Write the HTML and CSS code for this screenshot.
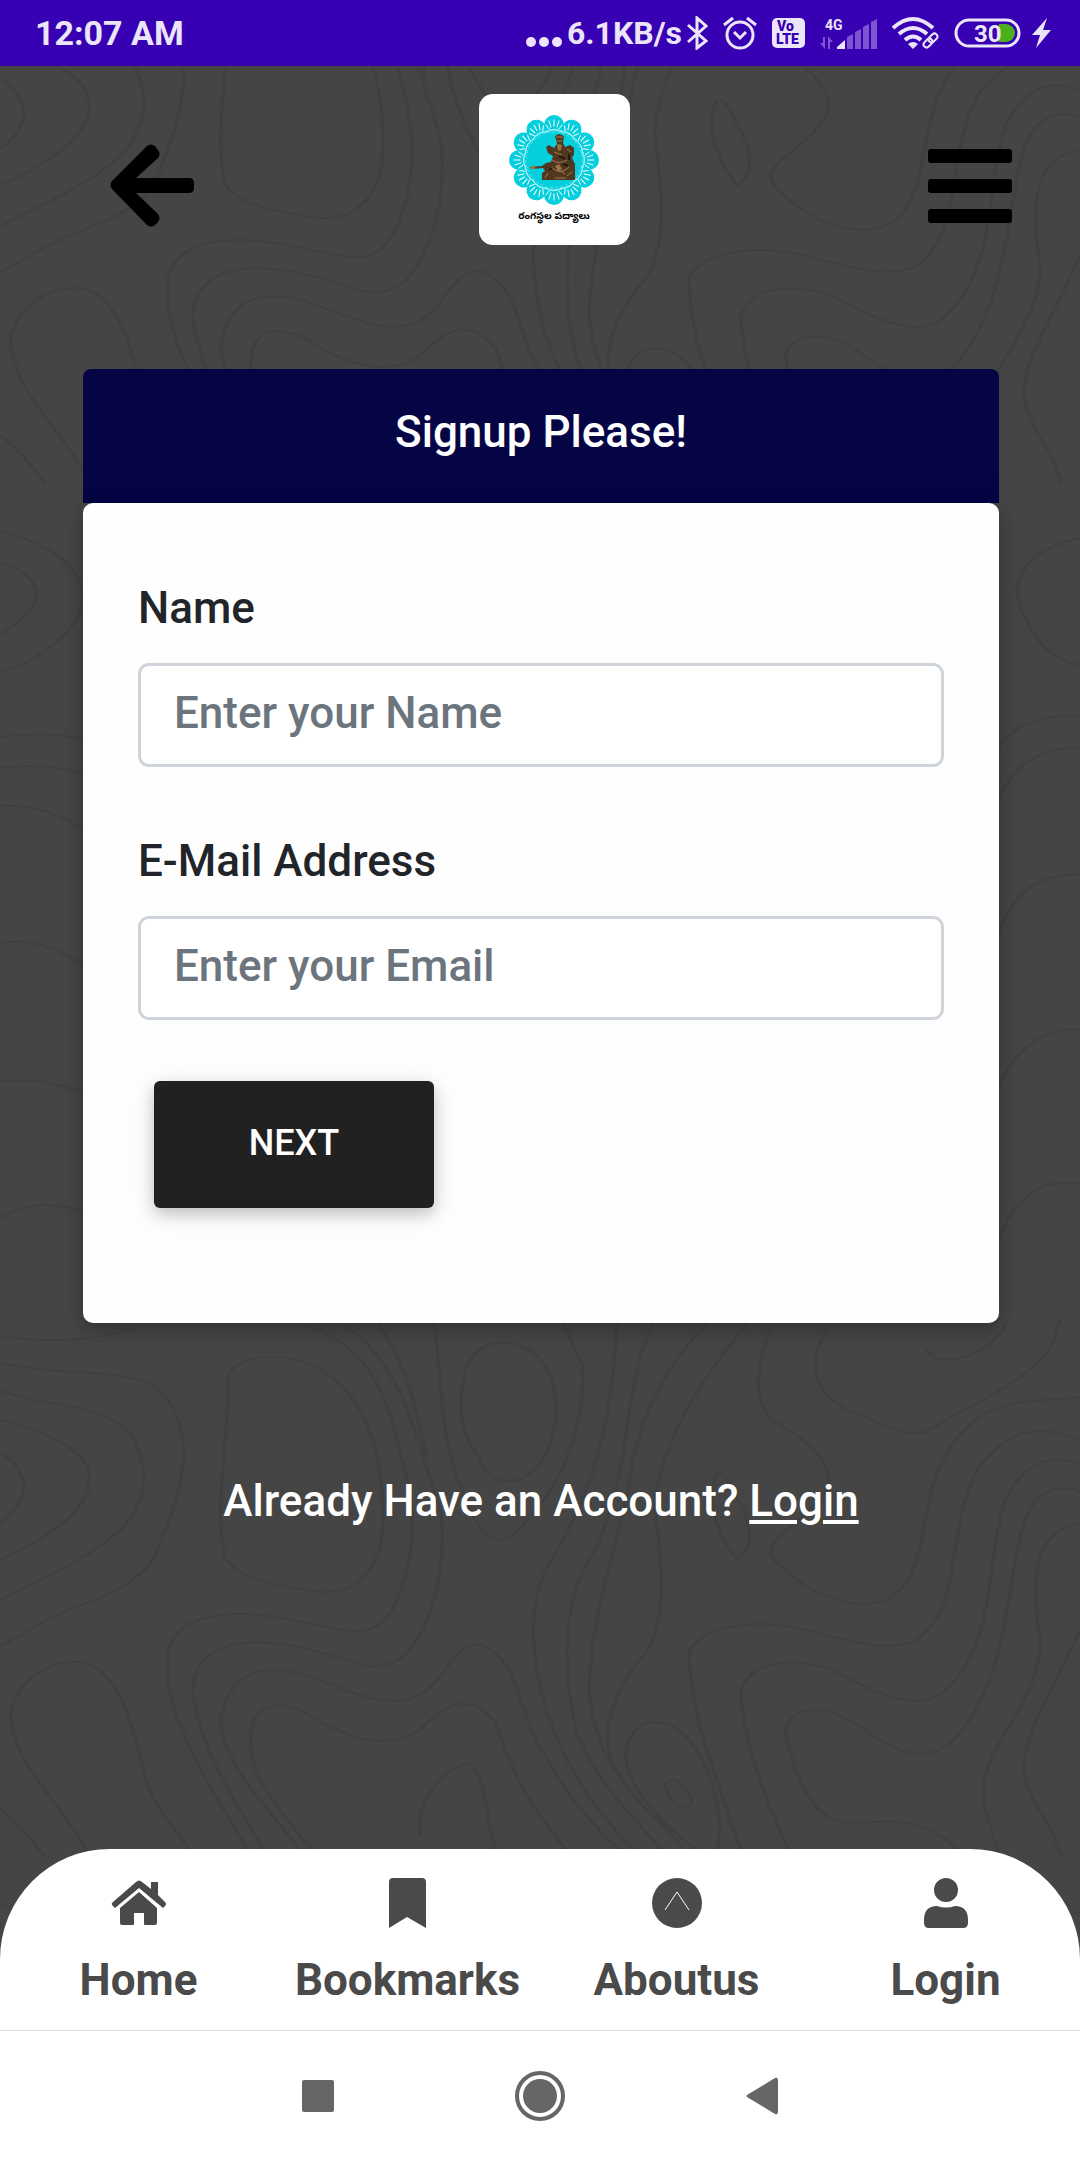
FILE: index.html
```html
<!DOCTYPE html>
<html lang="en">
<head>
    <meta charset="UTF-8">
    <meta name="viewport" content="width=device-width, initial-scale=1.0">
    <title>Signup</title>
    <link rel="stylesheet" href="styles.css">
</head>
<body>
    <!-- contour lines behind the page, the same tile twice -->
    <svg class="contours" viewBox="0 0 1080 2160" preserveAspectRatio="xMidYMin slice" aria-hidden="true">
        <defs>
            <g id="tile">
                <g transform="scale(0.689 0.344)">
                    <path d="M0 45C70 70 150 60 205 15M0 125C100 165 190 140 230 200C300 340 250 560 230 660C210 790 100 830 60 880C30 920 10 935 0 950"/>
                    <path d="M0 205C60 250 130 240 180 310C220 400 215 520 180 600C130 700 30 780 0 815M0 290C80 330 130 390 130 460C130 570 50 650 0 695M0 385C40 430 50 520 0 590"/>
                    <path d="M330 170C340 90 430 90 470 150C540 240 560 430 555 620C550 720 520 800 460 790C400 770 335 750 325 680C310 520 335 330 330 170Z"/>
                    <path d="M420 0C540 60 560 220 580 380C610 570 600 720 570 840C540 940 500 900 430 875C350 840 260 840 245 960C230 1130 300 1340 360 1540"/>
                    <path d="M490 0C590 130 600 330 640 560C650 760 620 900 590 970C540 1060 500 960 400 940C300 920 280 1010 280 1080C290 1250 340 1400 390 1560"/>
                    <path d="M545 0C600 150 605 300 620 400M320 1170C330 1020 380 1000 440 1030C500 1070 560 1140 610 1090C650 1040 660 930 700 945C760 1000 750 1150 790 1260C820 1380 860 1470 910 1560"/>
                    <path d="M320 1170C330 1330 410 1450 440 1560M460 1560C410 1430 355 1330 365 1190C370 1110 410 1100 450 1150C500 1210 560 1260 610 1190C650 1110 680 1080 720 1170C740 1310 770 1420 830 1560"/>
                    <path d="M675 150C690 40 760 40 790 130C825 250 800 400 770 445C740 490 710 470 695 400C665 320 665 240 675 150ZM630 0C640 160 640 360 670 490C700 660 730 680 770 570C830 440 850 260 845 130L815 0"/>
                    <path d="M895 0C890 300 860 500 800 700C760 830 775 1000 790 1120C820 1300 860 1420 930 1560M950 0C900 200 920 450 860 680C810 830 820 1050 835 1180C850 1310 920 1450 970 1560"/>
                    <path d="M1030 0C960 150 920 300 910 520C890 680 860 850 855 1060C860 1300 930 1400 990 1530M1090 0C1020 160 960 350 950 540C960 700 970 850 940 960C890 1070 870 1200 890 1290C930 1450 990 1490 1020 1560"/>
                    <path d="M1120 20C1100 120 1090 230 1120 290C1190 370 1210 430 1200 490C1170 600 1090 640 1130 710C1180 810 1250 850 1290 810C1350 740 1330 560 1370 400C1420 230 1470 240 1568 225"/>
                    <path d="M1200 30C1170 120 1180 210 1230 260C1280 300 1320 350 1350 320C1400 250 1500 180 1530 60L1538 0M1345 80C1350 150 1440 110 1460 10M1040 450C1020 540 1050 650 1070 695C1100 660 1085 560 1070 520C1060 470 1050 440 1040 450Z"/>
                    <path d="M1000 960C1020 900 1080 870 1140 890C1210 910 1280 980 1330 930C1400 830 1370 620 1420 430C1460 330 1500 290 1568 350M1000 960C1000 1150 1040 1320 1060 1460L1080 1560"/>
                    <path d="M1075 1080C1090 980 1160 980 1210 1020C1260 1070 1330 1150 1370 1080C1450 940 1430 680 1460 520C1490 400 1530 390 1568 420M1075 1080C1080 1250 1120 1440 1150 1560"/>
                    <path d="M1140 1190C1150 1110 1210 1130 1240 1170C1290 1240 1330 1300 1380 1230C1470 1050 1460 720 1490 570C1510 480 1550 480 1568 500M1140 1190C1150 1330 1180 1440 1220 1460C1270 1470 1330 1420 1390 1540"/>
                    <path d="M1568 590C1490 620 1500 780 1510 950C1500 1150 1410 1260 1430 1420L1450 1560M1540 1560C1520 1400 1460 1380 1500 1180L1568 900"/>
                    <path d="M15 1150C20 1050 80 970 130 1000C180 1050 190 1180 210 1320C220 1420 260 1480 280 1560M15 1150C20 1300 90 1400 130 1560M0 1420C30 1470 50 1520 65 1560"/>
                    <path d="M610 1500C600 1400 650 1290 680 1290C710 1330 700 1430 720 1540M910 1240C920 1150 970 1150 1000 1220C1040 1320 1050 1460 1040 1560M910 1240C900 1320 940 1420 990 1510M965 1350C980 1310 1000 1370 1005 1400C995 1440 970 1400 965 1350Z"/>
                    <path d="M0 1700C120 1760 150 1900 90 2010C50 2080 20 2100 0 2110M0 1790C60 1830 80 1910 0 2000M0 2300C100 2270 200 2330 240 2420M0 2390C110 2360 180 2440 230 2560M0 2500C90 2490 160 2600 200 2760M0 2900C60 2870 140 2960 190 3100M0 3300C90 3280 160 3350 210 3500M0 3700C80 3600 180 3700 200 3860"/>
                    <path d="M1568 1720C1480 1760 1460 1860 1490 1960C1510 2050 1540 2080 1568 2090M1568 2240C1490 2230 1450 2290 1430 2400M1568 2330C1480 2330 1450 2440 1440 2560M1568 2700C1490 2690 1450 2800 1440 2960M1568 3150C1500 3140 1450 3260 1440 3380M1568 3600C1490 3570 1450 3700 1440 3850"/>
                </g>
            </g>
        </defs>
        <use href="#tile" y="-54"/>
        <use href="#tile" y="1320"/>
    </svg>

    <div class="status-bar">
        <span class="clock">12:07 AM</span>
        <div class="status-icons">
            <div class="speed">
                <svg width="36" height="34" viewBox="0 0 36 34"><g fill="currentColor"><circle cx="5" cy="26" r="5"/><circle cx="18" cy="26" r="5"/><circle cx="31" cy="26" r="5"/></g></svg>
                <span>6.1KB/s</span>
                <svg width="21" height="34" viewBox="0 0 21 34"><path d="M1 9L19 25L10 32V2L19 10L1 26" fill="none" stroke="currentColor" stroke-width="3"/></svg>
            </div>
            <svg width="34" height="34" viewBox="0 0 34 34"><g fill="none" stroke="currentColor" stroke-width="3"><circle cx="17" cy="19" r="13"/><path d="M11 16L17 22L23 16M1 9L10 2M24 2L33 9"/></g></svg>
            <svg width="33" height="30" viewBox="0 0 33 30"><rect width="33" height="30" rx="5" fill="currentColor"/><g fill="#3700b3" font-family="Roboto, sans-serif" font-weight="900" font-size="14"><text x="5" y="13">Vo</text><text x="4" y="26">LTE</text></g></svg>
            <svg width="57" height="34" viewBox="0 0 57 34">
                <text x="5" y="14" fill="currentColor" font-family="Roboto, sans-serif" font-weight="700" font-size="14">4G</text>
                <g fill="#7d55d0"><path d="M0 27h3v-6h2v12zM8 20l5 6h-3v7H8zM27 21l6-3v15h-6zM35 16l6-3v20h-6zM43 11l6-3v25h-6zM51 6l6-3v30h-6z"/></g>
                <path d="M17 33V31L25 24V33z" fill="currentColor"/>
            </svg>
            <svg width="47" height="34" viewBox="0 0 47 34">
                <g fill="none" stroke="currentColor" stroke-width="4"><path d="M1 12Q21-6 41 12M7 18Q21 6 35 18M13 24Q21 17 29 24"/></g>
                <path d="M16 28Q21 24 26 28L21 33z" fill="currentColor"/>
                <g fill="none" stroke="currentColor" stroke-width="2"><rect x="31" y="24" width="10" height="6" rx="3" transform="rotate(-45 36 27)"/><rect x="36" y="19" width="10" height="6" rx="3" transform="rotate(-45 41 22)"/></g>
            </svg>
            <div class="power">
                <svg width="67" height="30" viewBox="0 0 67 30">
                    <rect x="2" y="2" width="63" height="26" rx="13" fill="none" stroke="currentColor" stroke-width="3"/>
                    <path d="M45 6h7a9 9 0 0 1 0 18h-7z" fill="#4caf1e"/>
                    <text x="20" y="24" fill="currentColor" font-family="Roboto, sans-serif" font-weight="700" font-size="24">30</text>
                </svg>
                <svg width="19" height="30" viewBox="0 0 19 30"><path d="M15 0L0 17H8L4 30L19 12H11z" fill="currentColor"/></svg>
            </div>
        </div>
    </div>

    <header class="top-bar">
        <button class="icon-button" type="button" aria-label="Back">
            <svg width="84" height="84" viewBox="0 0 84 84"><path d="M37 2Q41-1 45 2L48 6Q51 10 48 14L26 34H79Q84 34 84 39V44Q84 49 79 49H26L48 70Q51 74 48 78L45 81Q41 84 37 81L2 45Q-1 41 2 37z"/></svg>
        </button>
        <a class="logo" href="#" aria-label="Main page">
            <svg width="151" height="151" viewBox="0 0 151 151">
                <defs>
                    <g id="petal">
                        <circle cx="75" cy="31" r="10" fill="#05cfdd"/>
                        <path d="M75 32V26M72 33L70 27M78 33L80 27M70 35L67 31M80 35L83 31" stroke="#fff" stroke-width="1" stroke-linecap="round"/>
                        <path d="M67 38Q75 33 83 38" fill="none" stroke="#d5fbff" stroke-width="1"/>
                    </g>
                </defs>
                <circle cx="75" cy="66" r="33" fill="#05cfdd"/>
                <use href="#petal"/>
                <use href="#petal" transform="rotate(30 75 66)"/>
                <use href="#petal" transform="rotate(60 75 66)"/>
                <use href="#petal" transform="rotate(90 75 66)"/>
                <use href="#petal" transform="rotate(120 75 66)"/>
                <use href="#petal" transform="rotate(150 75 66)"/>
                <use href="#petal" transform="rotate(180 75 66)"/>
                <use href="#petal" transform="rotate(210 75 66)"/>
                <use href="#petal" transform="rotate(240 75 66)"/>
                <use href="#petal" transform="rotate(270 75 66)"/>
                <use href="#petal" transform="rotate(300 75 66)"/>
                <use href="#petal" transform="rotate(330 75 66)"/>
                <circle cx="75" cy="66" r="30" fill="none" stroke="#9af1f5" stroke-width="1" stroke-dasharray="2 1"/>
                <circle cx="75" cy="66" r="28" fill="none" stroke="#5fe6ee" stroke-width="1" stroke-dasharray="3 2"/>
                <path d="M76 42L80 40L85 42L84 49L86 53L91 51L95 54V60L93 64L96 70V86H63V79L66 77L64 74L53 75L51 73L63 72L67 69L72 68L74 62L69 59L67 53L70 51L75 54L78 50z" fill="#4f381f"/>
                <path d="M77 43h7M77 47h6M75 58L83 61M73 66Q80 71 88 66M72 73Q81 82 90 73M69 79L66 84M78 75L86 80M88 55L92 58M88 82L93 78M76 84H87" fill="none" stroke="#a37b4b" stroke-width="1"/>
                <path d="M78 50L83 51L82 56L79 57zM76 72L80 70L83 75L79 77zM52 72h4v3h-4z" fill="#9b7347"/>
                <path d="M80 62L86 65M70 76L73 74M84 70L89 72M90 60V66" stroke="#24170d" stroke-width="2"/>
                <text class="logo-text" x="75" y="125" text-anchor="middle">రంగస్థల పద్యాలు</text>
            </svg>
        </a>
        <button class="icon-button" type="button" aria-label="Menu">
            <svg width="84" height="84" viewBox="0 0 84 84"><rect y="5" width="84" height="14" rx="3"/><rect y="35" width="84" height="14" rx="3"/><rect y="65" width="84" height="14" rx="3"/></svg>
        </button>
    </header>

    <main class="content">
        <h1 class="card-title">Signup Please!</h1>
        <form class="card">
            <div class="field">
                <label for="name">Name</label>
                <input type="text" id="name" placeholder="Enter your Name">
            </div>
            <div class="field">
                <label for="email">E-Mail Address</label>
                <input type="email" id="email" placeholder="Enter your Email">
            </div>
            <button class="next-button" type="button">NEXT</button>
        </form>
        <p class="account">Already Have an Account? <a href="#">Login</a></p>
    </main>

    <nav class="bottom-nav">
        <a href="#">
            <svg width="56" height="52" viewBox="0 0 56 52"><path d="M25 5Q28 2 31 5L40 12V5H47V18L54 25Q56 27 54 29L52 31L28 11L4 31L1 28Q0 26 2 25z"/><path d="M28 15L46 31V46Q46 48 44 48H34Q33 48 33 47V36H23V47Q23 48 22 48H11Q9 48 9 46V31z"/></svg>
            <span>Home</span>
        </a>
        <a href="#">
            <svg width="37" height="52" viewBox="0 0 37 52"><path d="M0 5Q0 1 4 1H33Q37 1 37 5V51L18 40L0 51z"/></svg>
            <span>Bookmarks</span>
        </a>
        <a href="#">
            <svg width="50" height="52" viewBox="0 0 50 52"><circle cx="25" cy="26" r="25"/><path d="M13 33L25 15L37 33" fill="none" stroke="#fff" stroke-width="1"/></svg>
            <span>Aboutus</span>
        </a>
        <a href="#">
            <svg width="44" height="52" viewBox="0 0 44 52"><circle cx="22" cy="13" r="12"/><path d="M0 43Q0 29 13 29Q22 32 31 29Q44 29 44 43V46Q44 51 39 51H5Q0 51 0 46z"/></svg>
            <span>Login</span>
        </a>
    </nav>

    <div class="system-nav">
        <button type="button" aria-label="Recent apps"><svg width="50" height="50" viewBox="0 0 50 50"><rect x="9" y="9" width="32" height="32" rx="2"/></svg></button>
        <button type="button" aria-label="Home screen"><svg width="50" height="50" viewBox="0 0 50 50"><circle cx="25" cy="25" r="17"/><circle cx="25" cy="25" r="23" fill="none" stroke="#666" stroke-width="4"/></svg></button>
        <button type="button" aria-label="System back"><svg width="50" height="50" viewBox="0 0 50 50"><path d="M10 24L38 7Q41 6 41 9V41Q41 44 38 43L10 26Q9 25 10 24z"/></svg></button>
    </div>
</body>
</html>
```
FILE: styles.css
```css
* {
    box-sizing: border-box;
}
body {
    margin: 0;
    min-height: 100vh;
    display: flex;
    flex-direction: column;
    position: relative;
    background-color: #454545;
    color: #212529;
    font-family: Roboto, "Liberation Sans", sans-serif;
    font-size: 44px;
    font-weight: 500;
    line-height: 66px;
}
svg {
    display: block;
}
button {
    font: inherit;
    border: none;
    cursor: pointer;
}
.contours {
    position: absolute;
    top: 0;
    left: 0;
    width: 100%;
    height: 100%;
    z-index: -1;
    fill: none;
    stroke: #404040;
    stroke-width: 5;
}
.status-bar {
    display: flex;
    justify-content: space-between;
    align-items: center;
    height: 66px;
    padding: 0 29px 0 35px;
    background-color: #3700b3;
    color: #ece5fa;
    font-size: 34px;
}
.clock, .speed {
    font-weight: 700;
}
.status-icons {
    display: flex;
    align-items: center;
    gap: 15px;
}
.speed {
    display: flex;
    align-items: center;
    gap: 5px;
    font-size: 32px;
}
.power {
    display: flex;
    gap: 11px;
}
.top-bar {
    display: flex;
    justify-content: space-between;
    align-items: center;
    padding: 28px 68px 0 110px;
    margin-bottom: 124px;
}
.icon-button {
    padding: 0;
    background: none;
    margin-top: 32px;
}
.logo {
    margin-right: 14px;
    border-radius: 14px;
    background-color: #fff;
}
.logo-text {
    font-family: "Noto Sans Telugu", "Noto Sans", sans-serif;
    font-size: 10px;
    font-weight: 700;
}
.content {
    flex: 1;
    padding: 0 81px 0 83px;
}
.card-title {
    margin: 0;
    padding: 30px 0 38px;
    border-radius: 8px 8px 0 0;
    background-color: #050545;
    color: #fff;
    font-size: 44px;
    font-weight: 500;
    text-align: center;
}
.card {
    padding: 72px 55px 115px;
    border-radius: 10px;
    background-color: #fefefe;
    box-shadow: 0 6px 14px rgba(0, 0, 0, 0.16), 0 6px 28px rgba(0, 0, 0, 0.12);
}
.field {
    margin-bottom: 61px;
}
.field label {
    display: block;
    margin-bottom: 22px;
}
.field input {
    display: block;
    width: 100%;
    height: 104px;
    padding: 0 33px 4px;
    border: 3px solid #ced4da;
    border-radius: 11px;
    background-color: #fff;
    color: #495057;
    font: inherit;
}
.field input::placeholder {
    color: #6c757d;
    opacity: 1;
}
.next-button {
    display: block;
    width: 280px;
    height: 127px;
    margin-left: 16px;
    padding: 0 0 4px;
    border-radius: 6px;
    background-color: #212121;
    color: #fff;
    font-size: 36px;
    box-shadow: 0 6px 14px rgba(0, 0, 0, 0.16), 0 6px 28px rgba(0, 0, 0, 0.12);
}
.account {
    margin: 145px 0 0;
    color: #fff;
    text-align: center;
}
.account a {
    color: #fff;
    text-underline-offset: 4px;
}
.bottom-nav {
    display: grid;
    grid-template-columns: repeat(4, 1fr);
    padding: 28px 0 17px 4px;
    border-radius: 110px 110px 0 0;
    background-color: #fff;
}
.bottom-nav a {
    display: flex;
    flex-direction: column;
    align-items: center;
    gap: 18px;
    color: #4a4a4a;
    fill: #4a4a4a;
    font-weight: 700;
    text-decoration: none;
}
.system-nav {
    display: flex;
    justify-content: center;
    align-items: center;
    gap: 172px;
    height: 130px;
    border-top: 1px solid #ddd;
    background-color: #fff;
    fill: #666;
}
.system-nav button {
    padding: 0;
    background: none;
}
```
